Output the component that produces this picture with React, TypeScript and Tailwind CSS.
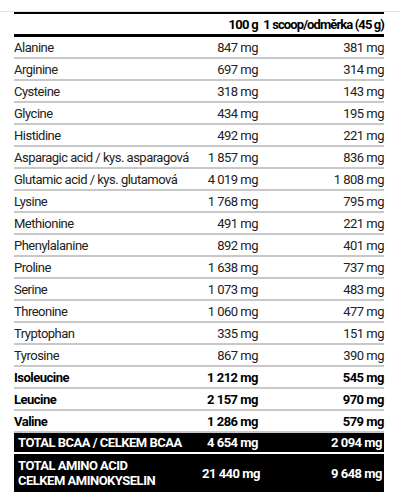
import React from 'react';

type Row = { name: string; a: string; b: string; bold?: boolean };

const ROWS: Row[] = [
  { name: 'Alanine', a: '847 mg', b: '381 mg' },
  { name: 'Arginine', a: '697 mg', b: '314 mg' },
  { name: 'Cysteine', a: '318 mg', b: '143 mg' },
  { name: 'Glycine', a: '434 mg', b: '195 mg' },
  { name: 'Histidine', a: '492 mg', b: '221 mg' },
  { name: 'Asparagic acid / kys. asparagová', a: '1 857 mg', b: '836 mg' },
  { name: 'Glutamic acid / kys. glutamová', a: '4 019 mg', b: '1 808 mg' },
  { name: 'Lysine', a: '1 768 mg', b: '795 mg' },
  { name: 'Methionine', a: '491 mg', b: '221 mg' },
  { name: 'Phenylalanine', a: '892 mg', b: '401 mg' },
  { name: 'Proline', a: '1 638 mg', b: '737 mg' },
  { name: 'Serine', a: '1 073 mg', b: '483 mg' },
  { name: 'Threonine', a: '1 060 mg', b: '477 mg' },
  { name: 'Tryptophan', a: '335 mg', b: '151 mg' },
  { name: 'Tyrosine', a: '867 mg', b: '390 mg' },
  { name: 'Isoleucine', a: '1 212 mg', b: '545 mg', bold: true },
  { name: 'Leucine', a: '2 157 mg', b: '970 mg', bold: true },
  { name: 'Valine', a: '1 286 mg', b: '579 mg', bold: true },
];

export default function App() {
  return (
    <div className="w-[400px] h-[500px] bg-white pt-[11px] font-['Roboto',sans-serif] text-[13px] tracking-[-0.5px] whitespace-nowrap text-[#222]">
      <div className="border-t border-[#e4e4e4]">
        <div className="mx-[14px] w-[370px] border-t-2 border-black">
          {/* header */}
          <div className="flex h-[23px] items-center border-b-[3px] border-black pt-[1px] font-bold text-black">
            <div className="flex-1" />
            <div className="w-[60px] text-right tracking-[-0.7px]">100 g</div>
            <div className="w-[126px] text-right tracking-[-0.9px]">1 scoop/odměrka (45 g)</div>
          </div>

          {ROWS.map((r) => (
            <div
              key={r.name}
              className={`flex h-[22px] items-center border-b-2 border-[#c8c8c8] pt-[1px] ${
                r.bold ? 'font-bold text-black' : ''
              }`}
            >
              <div className="flex-1">{r.name}</div>
              <div className="w-[60px] text-right">{r.a}</div>
              <div className="w-[126px] text-right">{r.b}</div>
            </div>
          ))}

          <div className="flex h-[19px] items-center bg-black pl-[4px] font-bold text-white">
            <div className="flex-1">TOTAL BCAA / CELKEM BCAA</div>
            <div className="w-[56px] text-right">4 654 mg</div>
            <div className="w-[126px] pr-[2px] text-right">2 094 mg</div>
          </div>
          <div className="mt-[2px] flex h-[38px] items-center bg-black pl-[4px] font-bold leading-[15px] text-white">
            <div className="flex-1">
              TOTAL AMINO ACID
              <br />
              CELKEM AMINOKYSELIN
            </div>
            <div className="w-[56px] text-right">21 440 mg</div>
            <div className="w-[126px] pr-[2px] text-right">9 648 mg</div>
          </div>
        </div>
      </div>
    </div>
  );
}
